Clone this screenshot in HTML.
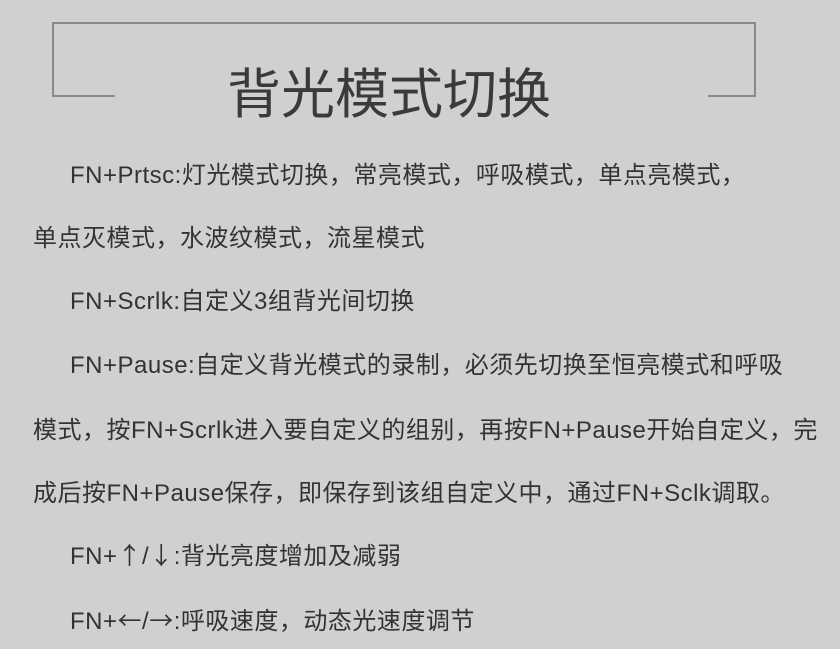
<!DOCTYPE html>
<html><head><meta charset="utf-8"><style>
html,body{margin:0;padding:0}
body{width:840px;height:649px;background:#d0d0d0;position:relative;overflow:hidden;font-family:"Liberation Sans","Noto Sans CJK SC",sans-serif;color:#333}
.l{position:absolute;background:#8a8a8a}
.t{position:absolute;left:227px;top:60px;font-size:54px;color:#3a3a3a;white-space:nowrap;line-height:70px;letter-spacing:0px}
.p{position:absolute;font-size:24px;line-height:32px;white-space:nowrap;color:#333;letter-spacing:0.5px}
.a{font-family:"Noto Sans CJK SC",sans-serif;line-height:20px}
</style></head><body>
<div class="l" style="left:52px;top:22px;width:704px;height:2px"></div>
<div class="l" style="left:52px;top:22px;width:2px;height:75px"></div>
<div class="l" style="left:754px;top:22px;width:2px;height:75px"></div>
<div class="l" style="left:52px;top:95px;width:63px;height:2px"></div>
<div class="l" style="left:708px;top:95px;width:48px;height:2px"></div>
<div class="t">背光模式切换</div>
<div class="p" style="left:70px;top:160px">FN+Prtsc:灯光模式切换，常亮模式，呼吸模式，单点亮模式，</div>
<div class="p" style="left:33px;top:223px">单点灭模式，水波纹模式，流星模式</div>
<div class="p" style="left:70px;top:286px">FN+Scrlk:自定义3组背光间切换</div>
<div class="p" style="left:70px;top:350px">FN+Pause:自定义背光模式的录制，必须先切换至恒亮模式和呼吸</div>
<div class="p" style="left:33px;top:415px">模式，按FN+Scrlk进入要自定义的组别，再按FN+Pause开始自定义，完</div>
<div class="p" style="left:33px;top:478px">成后按FN+Pause保存，即保存到该组自定义中，通过FN+Sclk调取。</div>
<div class="p" style="left:70px;top:541px">FN+<span class="a">↑</span>/<span class="a">↓</span>:背光亮度增加及减弱</div>
<div class="p" style="left:70px;top:606px">FN+<span class="a">←</span>/<span class="a">→</span>:呼吸速度，动态光速度调节</div>
</body></html>
